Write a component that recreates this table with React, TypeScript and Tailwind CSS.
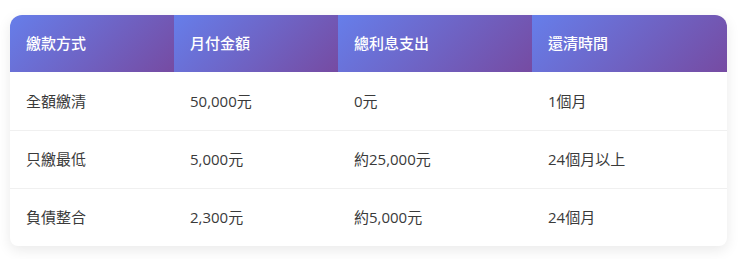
import React from 'react';

interface Plan {
    method: string;
    monthly: string;
    interest: string;
    duration: string;
}

const plans: Plan[] = [
    { method: '全額繳清', monthly: '50,000元', interest: '0元', duration: '1個月' },
    { method: '只繳最低', monthly: '5,000元', interest: '約25,000元', duration: '24個月以上' },
    { method: '負債整合', monthly: '2,300元', interest: '約5,000元', duration: '24個月' },
];

const headers = [
    { label: '繳款方式', width: 'w-[164px]' },
    { label: '月付金額', width: 'w-[164px]' },
    { label: '總利息支出', width: 'w-[194px]' },
    { label: '還清時間', width: 'w-[195px]' },
];

const App = () => {
    return (
        <div className="min-h-[259px] bg-white pt-[15px] pl-[10px] font-['Open_Sans','Noto_Sans_CJK_TC',sans-serif]">
            <div className="w-[717px] overflow-hidden rounded-t-[12px] rounded-b-[8px] bg-white shadow-[0_4px_14px_rgba(0,0,0,0.09)]">
                <table className="w-full border-collapse text-left text-[15px]">
                    <thead>
                        <tr>
                            {headers.map((h) => (
                                <th
                                    key={h.label}
                                    className={`${h.width} h-[57px] bg-[linear-gradient(135deg,#667eea_0%,#764ba2_100%)] px-4 font-medium text-white`}
                                >
                                    {h.label}
                                </th>
                            ))}
                        </tr>
                    </thead>
                    <tbody>
                        {plans.map((p, i) => (
                            <tr key={p.method} className={i < plans.length - 1 ? 'border-b border-[#f0f0f0]' : ''}>
                                <td className="h-[58px] px-4 text-[#3a3a3a]">{p.method}</td>
                                <td className="h-[58px] px-4 text-[#3a3a3a]">{p.monthly}</td>
                                <td className="h-[58px] px-4 text-[#3a3a3a]">{p.interest}</td>
                                <td className="h-[58px] px-4 text-[#3a3a3a]">{p.duration}</td>
                            </tr>
                        ))}
                    </tbody>
                </table>
            </div>
        </div>
    );
};

export default App;
